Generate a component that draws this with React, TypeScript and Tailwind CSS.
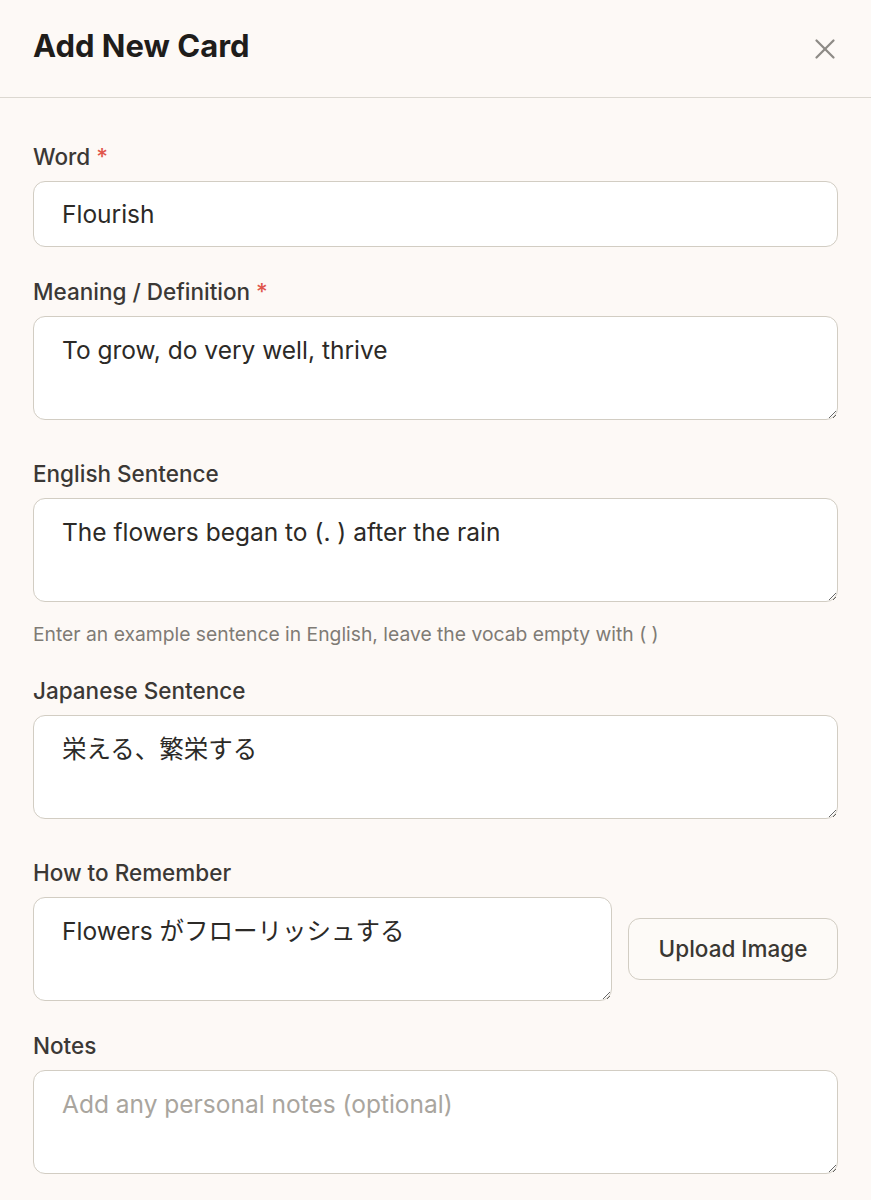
import React from 'react';
import { X } from 'lucide-react';

const fieldBase =
  'block w-full rounded-xl border border-[#d2cdc3] bg-white px-7 text-[24.5px] text-[#2c2a27] placeholder:text-[#a9a59e] outline-none';

const Label: React.FC<{ text: string; required?: boolean; className?: string }> = ({ text, required, className }) => (
  <label className={`block text-[22.5px] leading-[24px] font-medium text-[#3b3835] mb-3 ${className ?? ''}`}>
    {text}
    {required && <span className="text-[#e0564b]"> *</span>}
  </label>
);

const Area: React.FC<{ value?: string; placeholder?: string; className?: string }> = ({ value, placeholder, className }) => (
  <textarea
    defaultValue={value}
    placeholder={placeholder}
    className={`${fieldBase} h-[104px] pt-[19px] leading-[28px] ${className ?? ''}`}
  />
);

export default function App() {
  return (
    <div
      className="min-h-screen bg-[#fdf9f6]"
      style={{ fontFamily: 'Inter, "Noto Sans CJK JP", sans-serif' }}
    >
      {/* Header */}
      <div className="flex h-[98px] items-center justify-between border-b border-[#dcd8d1] px-[33px]">
        <h1 className="text-[31px] font-bold text-[#1f1d1b] -mt-[4px]">Add New Card</h1>
        <button className="text-[#8e8b86] -mr-[4px]" aria-label="Close">
          <X size={34} strokeWidth={1.6} />
        </button>
      </div>

      {/* Form */}
      <div className="px-[33px] pt-[47px] pb-8">
        <Label text="Word" required />
        <input defaultValue="Flourish" className={`${fieldBase} h-[66px]`} />

        <Label text="Meaning / Definition" required className="mt-[33px]" />
        <Area value="To grow, do very well, thrive" />

        <Label text="English Sentence" className="mt-[42px]" />
        <Area value="The flowers began to (. ) after the rain" />
        <p className="mt-5 text-[19.3px] leading-[24px] text-[#7f7b75]">
          Enter an example sentence in English, leave the vocab empty with ( )
        </p>

        <Label text="Japanese Sentence" className="mt-[33px]" />
        <Area value="栄える、繁栄する" />

        <Label text="How to Remember" className="mt-[42px]" />
        <div className="flex items-center gap-4">
          <Area value="Flowers がフローリッシュする" className="flex-1" />
          <button className="h-[62px] w-[210px] shrink-0 rounded-xl border border-[#d2cdc3] bg-[#fdfaf7] text-[22.5px] font-medium text-[#3a3733]">
            Upload Image
          </button>
        </div>

        <Label text="Notes" className="mt-[33px]" />
        <Area placeholder="Add any personal notes (optional)" />
      </div>
    </div>
  );
}
